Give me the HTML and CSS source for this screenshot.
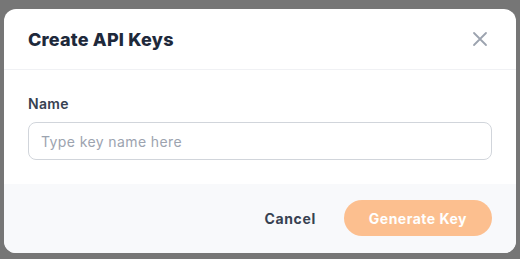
FILE: index.html
```html
<!DOCTYPE html>
<html lang="en">
<head>
    <meta charset="UTF-8">
    <meta name="viewport" content="width=device-width, initial-scale=1.0">
    <title>Create API Keys</title>
    <link rel="stylesheet" href="styles.css">
</head>
<body>
    <div class="modal">
        <div class="modal-header">
            <h2>Create API Keys</h2>
            <button class="close" aria-label="Close">
                <svg width="16" height="16" viewBox="0 0 16 16" fill="none" stroke="#9ca3af" stroke-width="1.8" stroke-linecap="round">
                    <path d="M2 2L14 14M14 2L2 14"/>
                </svg>
            </button>
        </div>
        <div class="modal-body">
            <label class="label" for="keyName">Name</label>
            <input class="input" id="keyName" type="text" placeholder="Type key name here">
        </div>
        <div class="modal-footer">
            <button class="btn-cancel">Cancel</button>
            <button class="btn-primary">Generate Key</button>
        </div>
    </div>
</body>
</html>
```

FILE: styles.css
```css
body {
    font-family: 'Inter', 'Noto Sans', sans-serif;
    background-color: #767676;
    margin: 0;
    padding: 9px 4px 6px 4px;
    height: 259px;
    box-sizing: border-box;
}
.modal {
    background-color: #ffffff;
    border-radius: 12px;
    overflow: hidden;
    height: 244px;
    display: flex;
    flex-direction: column;
}
.modal-header {
    height: 60px;
    padding: 0 28px 0 24px;
    border-bottom: 1px solid #f0f1f4;
    display: flex;
    align-items: center;
    justify-content: space-between;
}
.modal-header h2 {
    margin: 0;
    font-size: 18px;
    font-weight: 800;
    color: #1e293b;
    letter-spacing: 0.2px;
}
.close {
    background: none;
    border: none;
    padding: 0;
    width: 16px;
    height: 16px;
    display: flex;
}
.modal-body {
    padding: 24px 24px 24px 24px;
    display: flex;
    flex-direction: column;
}
.label {
    font-size: 14px;
    line-height: 20px;
    font-weight: 600;
    color: #374151;
    margin-bottom: 8px;
    letter-spacing: 0.3px;
}
.input {
    height: 38px;
    box-sizing: border-box;
    border: 1px solid #d1d5db;
    border-radius: 8px;
    padding: 0 12px;
    font-family: inherit;
    font-size: 14px;
    color: #374151;
    letter-spacing: 0.4px;
}
.input::placeholder {
    color: #9ca3af;
}
.modal-footer {
    flex: 1;
    background-color: #f8f9fb;
    padding: 16px 24px;
    display: flex;
    justify-content: flex-end;
    align-items: flex-start;
    gap: 12px;
}
.btn-cancel {
    background: none;
    border: none;
    font-family: inherit;
    font-size: 14px;
    font-weight: 700;
    color: #374151;
    height: 36px;
    padding: 0 16px;
    letter-spacing: 0.6px;
}
.btn-primary {
    background-color: #fcbf8f;
    border: none;
    border-radius: 18px;
    height: 36px;
    padding: 0 25px;
    font-family: inherit;
    font-size: 14px;
    font-weight: 700;
    color: #ffffff;
    letter-spacing: 0.5px;
}
```
